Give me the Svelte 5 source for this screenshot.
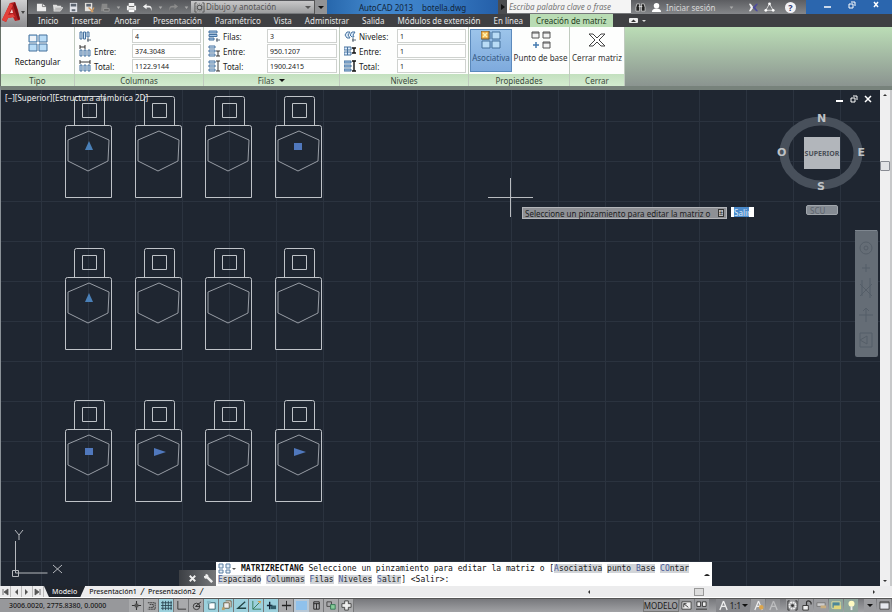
<script>
  const quick = ['new', 'open', 'save', 'saveas', 'plot', 'caret', 'print', 'undo', 'caret', 'redo', 'caret'];
  const tabs = ['Inicio', 'Insertar', 'Anotar', 'Presentación', 'Paramétrico', 'Vista', 'Administrar', 'Salida', 'Módulos de extensión', 'En línea'];
  const groups = [
    { name: 'Columnas', cls: 'columns', rows: [['', 'colCount', '4'], ['Entre:', 'colGap', '374.3048'], ['Total:', 'colTotal', '1122.9144']] },
    { name: 'Filas', cls: 'rows', menu: true, rows: [['Filas:', 'rowCount', '3'], ['Entre:', 'rowGap', '950.1207'], ['Total:', 'rowTotal', '1900.2415']] },
    { name: 'Niveles', cls: 'levels', rows: [['Niveles:', 'lvlCount', '1'], ['Entre:', 'lvlGap', '1'], ['Total:', 'lvlTotal', '1']] }
  ];
  const bottles = [0, 1, 2].flatMap((r) => [0, 1, 2, 3].map((c) => ({ x: 65 + c * 70, y: 35 + r * 152 })));
  const grips = [
    { kind: 'up', x: 89, y: 57 }, { kind: 'square', x: 298, y: 57 },
    { kind: 'up', x: 89, y: 209 }, { kind: 'square', x: 89, y: 362 },
    { kind: 'right', x: 159, y: 362 }, { kind: 'right', x: 299, y: 362 }
  ];
  const modes = [
    ['infer', ''], ['snap', ''], ['grid', 'on'], ['ortho', ''], ['polar', ''], ['osnap', 'on'], ['osnap3d', 'on'],
    ['otrack', 'on'], ['ducs', 'on'], ['dyn', 'on'], ['lwt', ''], ['tpy', 'blue'], ['qp', ''], ['sc', ''], ['plus', '']
  ];
  const names = {
    new: 'Nuevo', open: 'Abrir', save: 'Guardar', saveas: 'Guardar como', plot: 'Trazar', caret: 'Más', print: 'Imprimir', undo: 'Deshacer', redo: 'Rehacer',
    infer: 'Inferir restricciones', snap: 'Forzar cursor', grid: 'Rejilla', ortho: 'Orto', polar: 'Polar', osnap: 'Refent', osnap3d: 'Refent 3D',
    otrack: 'Rastreo', ducs: 'SCP dinámico', dyn: 'Entrada dinámica', lwt: 'Grosor de línea', tpy: 'Transparencia', qp: 'Propiedades rápidas', sc: 'Ciclo de selección', plus: 'Supervisor'
  };
</script>

{#snippet icon(name)}
  <svg class="icon" viewBox="0 0 12 12" aria-hidden="true">
    {#if name === 'new'}
      <path d="M1 2h6l4 3v5H1z" fill="#eee" /><path d="M7 2v3h4" fill="none" stroke="#777" />
    {:else if name === 'open'}
      <path d="M1 3h4l1 1h4v2H4l-2 4z" fill="#ddd" /><path d="M4 6h8l-3 4H2z" fill="#bbb" stroke="#eee" stroke-width=".6" />
    {:else if name === 'save'}
      <rect x="2" y="1" width="8" height="10" fill="#e2e4ea" /><path d="M3 2h6v3H3zM4 8h4v2H4z" fill="#5c6470" />
    {:else if name === 'saveas'}
      <rect x="1" y="1" width="8" height="9" fill="#e2e0dc" /><path d="M2.500 2h5v3h-5z" fill="#5c6470" /><path d="M5 6l5 5M8 11l3-5" stroke="#d09a62" stroke-width="1.500" />
    {:else if name === 'plot'}
      <path d="M2 2h6v8H1z" fill="#888" /><path d="M4 7h6v3H4z" fill="#666" stroke="#999" />
    {:else if name === 'caret'}
      <path d="M4 5h4L6 7.500z" fill="#aaa" />
    {:else if name === 'print'}
      <path d="M3 1h6v3h2v5H1V4h2z" fill="#f2f2f2" /><path d="M3 5h6M3 8h6" stroke="#555" /><path d="M3 8h6v3H3z" fill="#fff" />
    {:else if name === 'undo'}
      <path d="M5 2L1 5l4 3V6h3q2 0 2 4 2-6-3-6H5z" fill="#f1f1f1" />
    {:else if name === 'redo'}
      <path d="M7 2l4 3-4 3V6H4Q2 6 2 10 0 4 5 4h2z" fill="#8b8b8b" />
    {:else if name === 'gear'}
      <circle cx="6" cy="6" r="2.500" fill="none" stroke="#555" stroke-width="1.200" /><path d="M3 1H1v10h2M9 1h2v10H9" fill="none" stroke="#555" /><circle cx="6" cy="6" r="4" fill="none" stroke="#777" stroke-dasharray="1.500 1" />
    {:else if name === 'find'}
      <path d="M2 2h3v8H1V6zM7 2h3l1 4v4H7z" fill="#222" stroke="#ddd" stroke-width=".8" /><path d="M4 5h4" stroke="#ddd" />
    {:else if name === 'user'}
      <circle cx="6" cy="4" r="3" fill="#fff" /><path d="M1 11q0-4 5-4t5 4z" fill="#fff" />
    {:else if name === 'exchange'}
      <path d="M1 2h2l3 4-3 4H1l2-4z" fill="#eee" /><path d="M11 2H9L5 6l4 4h2L8 6z" fill="#4b4a9c" />
    {:else if name === 'tri'}
      <path d="M6 2l4 7H2z" fill="none" stroke="#ddd" /><circle cx="6" cy="2" r="1.500" fill="#fff" /><circle cx="2" cy="9" r="1.500" fill="#fff" /><circle cx="10" cy="9" r="1.500" fill="#fff" />
    {:else if name === 'colCount'}
      <path d="M1 2h2v7H1zM4.500 2h2v7h-2zM8 2h2v5H8z" fill="#dcebfa" stroke="#46729f" /><path d="M8 10h4M9 8v4" stroke="#345" stroke-width=".8" />
    {:else if name === 'colGap'}
      <path d="M1 5h2v6H1zM5 5h2v6H5zM9 5h2v6H9z" fill="#dcebfa" stroke="#46729f" /><path d="M1 0v4M6 0v4M1 2h5" stroke="#222" stroke-width=".9" />
    {:else if name === 'colTotal'}
      <path d="M1 5h2v6H1zM5 5h2v6H5zM9 5h2v6H9z" fill="#dcebfa" stroke="#46729f" /><path d="M1 0v4M11 0v4M1 2h10" stroke="#222" stroke-width=".9" />
    {:else if name === 'rowCount'}
      <path d="M1 1h8v2H1zM1 4.500h8v2H1zM1 8h5v2H1z" fill="#a9c9ea" stroke="#46729f" /><path d="M8 10h4M9 8v4" stroke="#345" stroke-width=".8" />
    {:else if name === 'rowGap'}
      <path d="M1 1h6v2H1zM1 5h6v2H1zM1 9h6v2H1z" fill="#dcebfa" stroke="#46729f" /><path d="M8 6h4M8 11h4M10 6v5" stroke="#222" stroke-width=".9" />
    {:else if name === 'rowTotal'}
      <path d="M1 1h6v2H1zM1 5h6v2H1zM1 9h6v2H1z" fill="#dcebfa" stroke="#46729f" /><path d="M8 1h4M8 11h4M10 1v10" stroke="#222" stroke-width=".9" />
    {:else if name === 'lvlCount'}
      <path d="M1 5l2-3h3L4 5l2 3H3zM6 5l2-3h3L9 5l1 2H8z" fill="#dcebfa" stroke="#46729f" /><path d="M8 10h4M9 8v4" stroke="#345" stroke-width=".8" />
    {:else if name === 'lvlGap'}
      <path d="M0 2h7v3H0zM0 7h7v3H0zM3.500 2v8" fill="#dcebfa" stroke="#46729f" /><path d="M8 3h4M8 8h4M10 3v5" stroke="#111" stroke-width="1.400" />
    {:else if name === 'lvlTotal'}
      <path d="M0 1h7v2H0zM0 5h7v2H0zM0 9h7v2H0z" fill="#a9c9ea" stroke="#46729f" /><path d="M8 1h4M8 11h4M10 1v10" stroke="#111" stroke-width="1.400" />
    {:else if name === 'infer'}
      <path d="M6 1v10M1 6h10" stroke="#333" stroke-width="1.200" /><path d="M4 4h4v4H4z" fill="#555" />
    {:else if name === 'snap'}
      <path d="M2 3h8v7H2M4 5h4v3H3" fill="none" stroke="#333" stroke-dasharray="2 .5" />
    {:else if name === 'grid'}
      <path d="M2 1v10M5 1v10M8 1v10M11 1v10M0 3h12M0 6h12M0 9h12" stroke="#27404c" stroke-width=".9" />
    {:else if name === 'ortho'}
      <path d="M2 1v9h9" fill="none" stroke="#333" />
    {:else if name === 'polar'}
      <circle cx="6" cy="7" r="3.500" fill="none" stroke="#333" /><path d="M5 7l6-5M5 7h5" stroke="#222" />
    {:else if name === 'osnap'}
      <path d="M3 3h7v7H3z" fill="#fff" stroke="#33606c" /><path d="M1 1h4v3H1z" fill="#86b8c5" />
    {:else if name === 'osnap3d'}
      <path d="M3 3h6v6H3zM5 1h6v7" fill="#eee" stroke="#6b5c3e" /><path d="M1 8h3v3H1z" fill="#bca36a" />
    {:else if name === 'otrack'}
      <path d="M10 2L2 9h9" fill="none" stroke="#244" stroke-width="1.400" />
    {:else if name === 'ducs'}
      <path d="M2 1v9h9M2 10l7-7" fill="none" stroke="#375" /><path d="M7 1l3 3 1-3z" fill="#d49e45" />
    {:else if name === 'dyn'}
      <path d="M4 2v8M1 6h6" stroke="#123" stroke-width="1.500" /><path d="M5 6h6v4H5z" fill="#315c68" />
    {:else if name === 'lwt'}
      <path d="M1 6h10" stroke="#222" stroke-width="1.600" /><path d="M6 1v10" stroke="#222" />
    {:else if name === 'qp'}
      <path d="M3 2h6v8H3zM3 4h6M6 4v6" fill="none" stroke="#222" />
    {:else if name === 'sc'}
      <path d="M1 2h5v5H1z" fill="none" stroke="#444" /><path d="M5 5h5v5H5z" fill="#8c9" stroke="#375" />
    {:else if name === 'plus'}
      <path d="M4 1h4v3h3v4H8v3H4V8H1V4h3z" fill="#eee" stroke="#444" />
    {:else if name === 'layout'}
      <path d="M1 2h10v8H1z" fill="#eee" stroke="#444" /><path d="M3 4l5 4M3 8V4h3" fill="none" stroke="#333" />
    {:else if name === 'views'}
      <path d="M1 2h4v5H1zM7 2h4v5H7zM0 10h12" fill="#eee" stroke="#333" />
    {:else if name === 'scale'}
      <path d="M6 1L2 11M6 1l4 10M3 7h6" fill="none" stroke="#eee" stroke-width="1.400" />
    {:else if name === 'annot'}
      <path d="M6 1L2 11M6 1l4 10M3 7h6" fill="none" stroke="#eee" stroke-width="1.300" /><circle cx="9" cy="8" r="2.500" fill="#dda64c" />
    {:else if name === 'cog'}
      <path d="M3 1H1v10h2M9 1h2v10H9" fill="none" stroke="#333" /><circle cx="6" cy="6" r="3.500" fill="none" stroke="#f0f0f0" stroke-width="2" stroke-dasharray="2 .7" /><circle cx="6" cy="6" r="1.500" fill="#333" />
    {:else if name === 'lock'}
      <path d="M2 6h6v5H2z" fill="#eee" stroke="#333" /><path d="M6 6V3q0-2 2-2t3 2v2" fill="none" stroke="#333" stroke-width="1.300" />
    {:else if name === 'hard'}
      <path d="M1 3h9v4H1z" fill="#ccc" stroke="#777" /><path d="M5 6h6v3H5z" fill="#c9ad7e" />
    {:else if name === 'tray'}
      <path d="M1 2h9v7H1z" fill="#4c8799" stroke="#e8e3a2" /><path d="M3 6h8v4H3z" fill="#e0d67a" />
    {:else if name === 'bulb'}
      <circle cx="6" cy="4" r="3.300" fill="#fffbc2" /><path d="M5 7h2v4H5z" fill="#eee" />
    {:else if name === 'clean'}
      <path d="M1 2h10v8H1z" fill="#e6e9ef" stroke="#444" /><path d="M1 3h10" stroke="#444" />
    {:else if name === 'wrench'}
      <path d="M1 3q2 1 2-2 3 0 3 3l5 5-2 2-5-5Q1 7 1 3z" fill="#eee" />
    {/if}
  </svg>
{/snippet}

{#snippet fourUp(variant)}
  <svg class="big" viewBox="0 0 20 18" aria-hidden="true">
    {#if variant === 'base'}
      <path d="M1 1h7v6H1zM12 1h7v6h-7zM12 11h7v6h-7z" fill="#f3f3f3" stroke="#555" /><path d="M1 2h7M12 2h7M12 12h7" stroke="#555" /><path d="M5 11v6M2 14h6" stroke="#447bb0" stroke-width="1.500" />
    {:else}
      <path d="M1 1h8v7H1zM11 1h8v7h-8zM1 10h8v7H1zM11 10h8v7h-8z" fill="#b9dcf6" stroke="#44719b" />
      {#if variant === 'assoc'}<path d="M0 0h8v8H0z" fill="#f1b04a" stroke="#745c33" /><path d="M2 2l4 4M6 2L2 6" stroke="#fff3b0" stroke-width="1.500" />{:else}<path d="M2 2h6v5H2z" fill="#eef3f8" />{/if}
    {/if}
  </svg>
{/snippet}

<div class="app">
  <header>
    <button class="logo" aria-label="Menú de la aplicación">
      <svg viewBox="0 0 26 26" aria-hidden="true">
        <path d="M1 19L9 2l5-1 3 8 2 10-5 1-2-4-5 1-2 4z" fill="#b51f20" />
        <path d="M1 19L9 2l3 2-5 10 5-1 2 3-7 1-2 4z" fill="#e2403a" />
        <path d="M12 4l5 15 2-1-5-17z" fill="#7c1013" /><path d="M9 12l2-4 1 4z" fill="#f4d5d0" />
        <path d="M20 10h4l-2 3z" fill="#444" />
      </svg>
    </button>
    <div class="title">
      <div class="quick">
        {#each quick as q}<button class:narrow={q === 'caret'} aria-label={names[q]}>{@render icon(q)}</button>{/each}
      </div>
      <label class="workspace">
        {@render icon('gear')}
        <select aria-label="Espacio de trabajo"><option>Dibujo y anotación</option></select>
        <span class="arrow"></span>
      </label>
      <button class="more" aria-label="Personalizar"><span class="arrow dark"></span></button>
      <div class="doc"><span>AutoCAD 2013</span><span>botella.dwg</span></div>
      <button class="expand" aria-label="Mostrar búsqueda"><span></span></button>
      <input class="search" type="search" aria-label="Buscar" placeholder="Escriba palabra clave o frase" />
      <div class="session">
        <button aria-label="Buscar">{@render icon('find')}</button>
        <button class="login">{@render icon('user')}Iniciar sesión</button>
        <button class="push" aria-label="Opciones de sesión">{@render icon('caret')}</button>
        <button class="push" aria-label="Exchange">{@render icon('exchange')}</button>
        <button aria-label="Conexión">{@render icon('tri')}</button>
        <button class="help push" aria-label="Ayuda">?</button>
      </div>
      <div class="window">
        <button aria-label="Minimizar"><svg viewBox="0 0 8 8"><path d="M0 6h7" stroke="#fff" stroke-width="1.500" /></svg></button>
        <button aria-label="Restaurar"><svg viewBox="0 0 8 8"><path d="M3 1h4v4M1 3h4v4H1z" fill="none" stroke="#fff" /></svg></button>
        <button aria-label="Cerrar"><svg viewBox="0 0 8 8"><path d="M2 1l4 5M6 1L2 6" stroke="#fff" stroke-width="1.500" /></svg></button>
      </div>
    </div>
    <nav>
      {#each tabs as t}<button>{t}</button>{/each}
      <button class="active">Creación de matriz</button>
      <button class="min" aria-label="Minimizar cinta"><svg viewBox="0 0 17 6"><rect width="9" height="5" rx="1" fill="#eee" /><path d="M2 4l2.500-2.500L7 4z" fill="#333" /><path d="M13 2h4l-2 2z" fill="#ddd" /></svg></button>
    </nav>
  </header>

  <section class="ribbon">
    <div class="panel type">
      <div class="body"><button class="tool">{@render fourUp('rect')}<span>Rectangular</span></button></div>
      <h2>Tipo</h2>
    </div>
    {#each groups as g}
      <div class="panel {g.cls}">
        <div class="body fields">
          {#each g.rows as r}
            <label>{@render icon(r[1])}<span>{r[0]}</span><input value={r[2]} aria-label={r[0] || 'Columnas'} /></label>
          {/each}
        </div>
        <h2>{g.name}{#if g.menu}<i class="arrow dark"></i>{/if}</h2>
      </div>
    {/each}
    <div class="panel props">
      <div class="body">
        <button class="tool pressed">{@render fourUp('assoc')}<span>Asociativa</span></button>
        <button class="tool wide">{@render fourUp('base')}<span>Punto de base</span></button>
      </div>
      <h2>Propiedades</h2>
    </div>
    <div class="panel close">
      <div class="body">
        <button class="tool">
          <svg class="big" viewBox="0 0 20 18" aria-hidden="true"><path d="M2 3h4l4 4 4-4h4l-6 6 6 6h-4l-4-4-4 4H2l6-6z" fill="#fff" stroke="#444" /></svg>
          <span>Cerrar matriz</span>
        </button>
      </div>
      <h2>Cerrar</h2>
    </div>
  </section>

  <main>
    <div class="canvas">
      <svg class="drawing" aria-label="Dibujo">
        <defs>
          <pattern id="grid" x="41" y="31" width="47" height="40" patternUnits="userSpaceOnUse">
            <path d="M0 .5h47M.5 0v40" stroke="#2b333f" />
          </pattern>
        </defs>
        <rect width="100%" height="100%" fill="url(#grid)" />
        {#each bottles as b}
          <g transform="translate({b.x} {b.y})" fill="none" stroke="#bfc3c8">
            <path d="M9.500 .5V-26.500q0-2 2-2h26q2 0 2 2V.5" />
            <path d="M17.500-21.500h14v14h-14z" />
            <path d="M.5 2.500q0-2 2-2h42q2 0 2 2v70H.5z" />
            <path d="M24 6l20 9-1 21-20 10-20-10V15z" stroke="#989da5" />
          </g>
        {/each}
        {#each grips as g}
          <path transform="translate({g.x} {g.y})" d={g.kind === 'up' ? 'M0-6l4 9h-8z' : g.kind === 'right' ? 'M-5-4l12 4-12 4z' : 'M-4-4h8v7h-8z'} fill={g.kind === 'up' ? '#4a80b8' : '#5078bd'} />
        {/each}
        <path d="M510.500 88v39M488 107.500h45" stroke="#b9bcc0" />
      </svg>

      <div class="view">[&minus;][Superior][Estructura alámbrica 2D]</div>
      <svg class="ucs" viewBox="0 0 56 50" aria-hidden="true">
        <path d="M5.500 12v32h32M2.500 41.500h6v6h-6zM5 1l4 5 4-5M9 6v5M43 36l9 8M52 36l-9 8" fill="none" stroke="#b5b8bd" />
      </svg>

      <div class="tip">
        <label for="dyn">Seleccione un pinzamiento para editar la matriz o <kbd>±</kbd></label>
        <input id="dyn" value="Salir" />
      </div>

      <div class="docbtns">
        <button aria-label="Minimizar dibujo"><svg viewBox="0 0 8 8"><path d="M0 6h7" stroke="#fff" stroke-width="2" /></svg></button>
        <button aria-label="Restaurar dibujo"><svg viewBox="0 0 8 8"><path d="M3 1h4v4M1 3h4v4H1z" fill="none" stroke="#fff" /></svg></button>
        <button aria-label="Cerrar dibujo"><svg viewBox="0 0 8 8"><path d="M1 1l6 6M7 1L1 7" stroke="#fff" stroke-width="1.500" /></svg></button>
      </div>

      <div class="cube">
        <svg viewBox="0 0 90 84" aria-hidden="true"><ellipse cx="45" cy="43" rx="37" ry="32" fill="none" stroke="#48505b" stroke-width="9" /></svg>
        <b class="n">N</b><b class="e">E</b><b class="s">S</b><b class="o">O</b>
        <button>SUPERIOR</button>
      </div>
      <button class="wcs">SCU</button>

      <div class="navbar">
        <svg viewBox="0 0 23 127" aria-hidden="true">
          <g fill="none" stroke="#555e68">
            <path d="M0 .5h22" stroke="#7e868f" /><circle cx="11" cy="18" r="6" /><circle cx="11" cy="18" r="2" />
            <path d="M11 34v8M7 38h8M5 54l12 12M17 54L5 66M7 50v16M15 48v20M11 78v14M4 85h14M11 78l-3 3M11 78l3 3M5 103h12v14H5zM5 110l7-4v8z" />
          </g>
        </svg>
      </div>

      <div class="command">
        <div class="handle">
          <button aria-label="Cerrar línea de comandos"><svg class="icon" viewBox="0 0 12 12"><path d="M3 3l6 6M9 3L3 9" stroke="#eee" stroke-width="2" /></svg></button>
          <button aria-label="Personalizar">{@render icon('wrench')}</button>
        </div>
        <div class="prompt">
          <div class="line">
            <svg class="cmd" viewBox="0 0 23 11" aria-hidden="true"><path d="M1 1h4v4H1zM8 1h4v4H8zM1 7h4v3H1zM8 7h4v3H8z" fill="#e9f1f8" stroke="#5a7fa3" /><path d="M14 5h4l-2 2z" fill="#555" /></svg>
            <p><strong>MATRIZRECTANG</strong> Seleccione un pinzamiento para editar la matriz o [<mark><em>A</em>sociativa</mark> <mark>punto <em>B</em>ase</mark> <mark><em>CO</em>ntar</mark></p>
          </div>
          <p><mark><em>E</em>spaciado</mark> <mark><em>C</em>olumnas</mark> <mark><em>F</em>ilas</mark> <mark><em>N</em>iveles</mark> <mark><em>S</em>alir</mark>] &lt;Salir&gt;:</p>
          <button aria-label="Historial"><svg viewBox="0 0 6 4"><path d="M0 3q3-4 6 0z" fill="#222" /></svg></button>
        </div>
      </div>
    </div>
    <div class="vscroll">
      <svg viewBox="0 0 10 6"><path d="M3 4l2-2 2 2z" fill="#333" /></svg>
      <span></span>
      <svg viewBox="0 0 10 6"><path d="M3 2l2 2 2-2z" fill="#333" /></svg>
    </div>
  </main>

  <div class="sheets">
    <div class="steps">
      <button aria-label="Primera"><svg viewBox="0 0 8 8"><path d="M2 1v6M7 1L3 4l4 3z" stroke="#555" fill="#555" stroke-width=".8" /></svg></button>
      <button aria-label="Anterior"><svg viewBox="0 0 8 8"><path d="M6 1L3 4l3 3z" fill="#555" /></svg></button>
      <button aria-label="Siguiente"><svg viewBox="0 0 8 8"><path d="M2 1l3 3-3 3z" fill="#555" /></svg></button>
      <button aria-label="Última"><svg viewBox="0 0 8 8"><path d="M6 1v6M1 1l4 3-4 3z" stroke="#555" fill="#555" stroke-width=".8" /></svg></button>
    </div>
    <button class="sheet current">Modelo</button>
    <button class="sheet">Presentación1</button><i>/</i>
    <button class="sheet">Presentación2</button><i>/</i>
    <div class="hscroll">
      <svg viewBox="0 0 6 8"><path d="M4 2L2 4l2 2z" fill="#333" /></svg>
      <span></span>
      <svg viewBox="0 0 6 8"><path d="M2 2l2 2-2 2z" fill="#333" /></svg>
    </div>
  </div>

  <footer>
    <output>3006.0020, 2775.8380, 0.0000</output>
    <div class="modes">
      {#each modes as m}<button class={m[1]} aria-label={names[m[0]]}>{@render icon(m[0])}</button>{/each}
    </div>
    <div class="right">
      <button class="model">MODELO</button>
      <button aria-label="Presentación">{@render icon('layout')}</button>
      <button aria-label="Vistas">{@render icon('views')}</button>
      <button class="scale">{@render icon('scale')}1:1<i class="arrow dark"></i></button>
      <button aria-label="Visibilidad de anotación">{@render icon('annot')}</button>
      <button class="faded" aria-label="Escala automática">{@render icon('scale')}</button>
      <button class="space" aria-label="Espacio de trabajo">{@render icon('cog')}</button>
      <button aria-label="Bloquear">{@render icon('lock')}</button>
      <button aria-label="Hardware">{@render icon('hard')}</button>
      <button class="tray" aria-label="Bandeja">{@render icon('tray')}</button>
      <button class="tray" aria-label="Aislar objetos">{@render icon('bulb')}</button>
      <button class="space" aria-label="Menú"><i class="arrow dark"></i></button>
      <button aria-label="Pantalla limpia">{@render icon('clean')}</button>
    </div>
  </footer>
</div>

<style>
  :global(body) { background: #1f2631; }
  * { box-sizing: border-box; }
  .app { display: flex; flex-direction: column; min-height: 100vh; font: 8px/9px "Noto Sans", sans-serif; color: #222; background: #8d928f; overflow: hidden; }
  button { display: flex; align-items: center; justify-content: center; border: 0; padding: 0; margin: 0; background: none; font: inherit; color: inherit; white-space: nowrap; flex: none; }
  input, select { font: inherit; border: 0; border-radius: 0; margin: 0; padding: 0; min-width: 0; }
  svg { display: block; flex: none; }
  .icon { width: 11px; height: 11px; }
  .arrow { display: inline-block; border: 3px solid transparent; border-top-color: #555; border-bottom: 0; }
  .arrow.dark { border-top-color: #111; }

  header { display: grid; grid-template: 14px 13px / 28px minmax(0, 1fr); background: #3f4043; }
  .logo { grid-row: 1 / 3; background: linear-gradient(#d0d0d1, #8d8d90); border-left: 1px solid #444; border-right: 1px solid #333; }
  .logo svg { width: 26px; height: 26px; }
  .title { display: flex; align-items: stretch; background: linear-gradient(#55565a, #77797c); }
  .quick { display: flex; flex: 0 0 163px; padding-left: 5px; }
  .quick button { width: 16px; }
  .quick .narrow { width: 10px; }
  .workspace { display: flex; align-items: center; flex: 0 0 123px; background: linear-gradient(#c8c8c9, #9c9d9f); padding: 0 3px; gap: 1px; margin: 1px 0; }
  .workspace select { appearance: none; flex: 1; background: none; color: #555; line-height: 10px; }
  .more { width: 13px; background: #929395; border-left: 1px solid #555; }
  .doc { display: flex; flex: 1 1 170px; min-width: 0; justify-content: center; gap: 9px; align-items: center; background: linear-gradient(90deg, #2767ac, #4388cd 30%, #3a7ec6 60%, #245fa9); color: #10243a; white-space: nowrap; }
  .expand { width: 9px; background: #4b4c4f; }
  .expand span { border: 3px solid transparent; border-left: 4px solid #111; border-right: 0; }
  .search { flex: 0 0 124px; height: 13px; background: #f4f4f4; padding-left: 2px; font-style: italic; color: #777; }
  .search::placeholder { color: #777; opacity: 1; }
  .session { display: flex; flex: 0 0 175px; align-items: center; padding: 0 10px 0 4px; gap: 5px; color: #d8d8d8; background: linear-gradient(#5c5d61, #85878a); }
  .login { gap: 4px; }
  .push { margin-left: auto; }
  .help { width: 11px; height: 11px; border-radius: 50%; background: #f2f2f5; color: #313a72; font-weight: bold; font-size: 9px; }
  .window { display: flex; flex: 0 0 86px; justify-content: space-around; padding: 0 4px 4px 10px; background: #2b66ae; }
  .window svg, .docbtns svg { width: 8px; height: 8px; }
  nav { display: flex; color: #e6e6e6; padding-left: 4px; }
  nav button { padding: 0 7px 0 6px; }
  nav .active { background: #b9dcb4; color: #1f3a22; }
  nav .min { padding: 0 16px; }
  nav svg { width: 17px; height: 6px; }

  .ribbon { display: flex; height: 59px; flex: none; border-left: 1px solid #69736a; background: linear-gradient(#bbddb6, #8b9490); }
  .panel { display: flex; flex-direction: column; background: #fdfefd; border-right: 1px solid #c0cbbf; flex: none; }
  .body { display: flex; flex: 1; padding: 2px 1px 0; }
  h2 { display: flex; align-items: center; justify-content: center; gap: 5px; height: 12px; margin: 0; font: inherit; color: #3b4a3b; background: linear-gradient(#c3e0bf, #d4ecd0); }
  .type { width: 74px; }
  .columns { width: 129px; }
  .rows { width: 136px; }
  .levels { width: 129px; }
  .props { width: 101px; }
  .close { width: 55px; }
  .fields { flex-direction: column; padding: 2px 2px 1px 4px; gap: 1px; }
  .fields label { display: flex; align-items: center; flex: 1; gap: 3px; }
  .fields .icon { width: 12px; height: 12px; }
  .fields span { flex: 0 0 35px; }
  .rows .fields span { flex-basis: 41px; }
  .fields input { flex: 1; height: 14px; width: 20px; border: 1px solid #cfd2cf; padding-left: 2px; font-size: 7px; background: #fff; color: #222; }
  .tool { flex-direction: column; justify-content: flex-start; width: 42px; height: 43px; padding-top: 2px; gap: 4px; color: #333; }
  .type .tool { width: 100%; padding-top: 5px; gap: 5px; color: #111; }
  .tool.wide { width: 57px; }
  .close .tool { width: 100%; }
  .tool.pressed { background: linear-gradient(#9cc4ea, #7eaadd); border: 1px solid #5b8abd; padding-top: 1px; color: #34577f; }
  .big { width: 20px; height: 18px; }

  main { display: flex; flex: 1; min-height: 497px; border-top: 4px solid #77827b; border-left: 1px solid #8a9197; }
  .canvas { position: relative; flex: 1; min-width: 0; background: #1f2631; overflow: hidden; }
  .drawing { position: absolute; left: -1px; top: 0; width: calc(100% + 1px); height: 100%; }
  .view { position: absolute; left: 4px; top: 3px; color: #eee; }
  .ucs { position: absolute; left: 9px; bottom: 7px; width: 56px; height: 50px; }
  .tip { position: absolute; left: 521px; top: 117px; display: flex; gap: 4px; height: 12px; }
  .tip label { display: flex; align-items: center; justify-content: space-between; width: 205px; padding: 0 2px; background: #8e9095; color: #1c1d22; border: 1px solid #b3b5b9; white-space: nowrap; }
  .tip kbd { font: inherit; font-size: 7px; line-height: 6px; border: 1px solid #333; background: #bbb; }
  .tip input { width: 23px; padding-left: 3px; height: 10px; background: linear-gradient(90deg, #fff 3px, #4b8acb 3px, #4b8acb 18px, #fff 18px); color: #dceaf8; }
  .docbtns { position: absolute; right: 8px; top: 5px; display: flex; gap: 6px; }
  .cube { position: absolute; right: 14px; top: 20px; width: 90px; height: 84px; }
  .cube svg { width: 90px; height: 84px; }
  .cube b { position: absolute; font: bold 11px/12px "DejaVu Sans", sans-serif; color: #bec2c6; }
  .cube .n { left: 41px; top: 3px; }
  .cube .s { left: 41px; bottom: 1px; }
  .cube .e { right: 1px; top: 37px; }
  .cube .o { left: 1px; top: 37px; }
  .cube button { position: absolute; left: 28px; top: 27px; width: 36px; height: 32px; background: #b2b6bb; color: #4a4f57; font-size: 7px; font-weight: bold; }
  .wcs { position: absolute; right: 42px; top: 115px; width: 32px; height: 10px; justify-content: flex-start; padding-left: 3px; background: #858b93; border: 1px solid #a0a5ab; border-radius: 2px; color: #5d646d; }
  .navbar { position: absolute; right: 2px; top: 140px; width: 23px; height: 127px; background: #656d76; border-radius: 2px; }
  .navbar svg { width: 23px; height: 127px; }
  .command { position: absolute; left: 178px; bottom: 0; display: flex; align-items: flex-end; width: 533px; max-width: 75%; font: 8px/11px "DejaVu Sans Mono", monospace; }
  .handle { display: flex; justify-content: flex-end; gap: 5px; width: 37px; height: 16px; padding: 0 2px; background: linear-gradient(90deg, #3c3f44, #75777a); }
  .prompt { position: relative; flex: 1; min-width: 0; height: 24px; padding: 1px 2px; background: #fff; color: #111; }
  .prompt p { margin: 0; white-space: pre; }
  .line { display: flex; }
  .prompt mark { background: #d1d4d8; color: #222; }
  .prompt em { font-style: normal; color: #4c5d9a; }
  .prompt > button { position: absolute; right: 2px; top: 11px; }
  .prompt > button svg { width: 6px; height: 4px; }
  .cmd { width: 23px; height: 11px; }
  .vscroll { display: flex; flex-direction: column; flex: 0 0 12px; background: #efeff0; border-right: 2px solid #c7c8c9; }
  .vscroll svg { width: 10px; height: 10px; }
  .vscroll span { width: 10px; height: 10px; margin: 61px 0 auto; background: #e2e3e6; border: 1px solid #888b93; border-radius: 1px; }

  .sheets { display: flex; height: 12px; flex: none; background: #ececed; border-bottom: 1px solid #fff; color: #222; }
  .steps { display: flex; }
  .steps button { width: 11px; border-right: 1px solid #bbb; }
  .steps svg { width: 8px; height: 8px; }
  .sheet { padding: 0 4px; font-size: 7px; font-weight: 500; }
  .sheet.current { background: #20252d; color: #eee; padding: 0 8px; clip-path: polygon(0 0, 100% 0, 88% 100%, 12% 100%); }
  .sheets i { font-size: 9px; line-height: 11px; }
  .hscroll { display: flex; align-items: center; flex: 1; margin-left: auto; max-width: 306px; padding-right: 15px; }
  .hscroll svg { width: 6px; height: 8px; }
  .hscroll span { width: 10px; height: 8px; margin: 0 auto 0 102px; border: 1px solid #999; background: #ddd; }

  footer { display: flex; align-items: stretch; height: 14px; flex: none; background: linear-gradient(#77787c, #a1a2a5); color: #1b1b1b; border-top: 1px solid #555; }
  output { flex: 0 0 129px; padding: 2px 0 0 9px; white-space: nowrap; font-size: 7px; font-weight: 500; background: #97989b; }
  .modes, .right { display: flex; }
  .modes button { width: 15px; background: #a9aaac; border-right: 1px solid #77787a; }
  .modes .on { background: #9bd0dc; }
  .modes .blue { background: #8fc1ec; border: 2px solid #b8c8d6; }
  .right { margin-left: auto; padding-right: 1px; gap: 1px; }
  .right button { min-width: 14px; background: #9b9c9f; }
  .right .model { width: 36px; border: 1px solid #777; }
  .right .scale { margin-left: 6px; gap: 1px; padding: 0 2px; background: #85868a; }
  .right .faded { opacity: .5; }
  .right .space { margin-left: 5px; min-width: 12px; }
  .right .tray { background: #8fa59c; }
</style>
